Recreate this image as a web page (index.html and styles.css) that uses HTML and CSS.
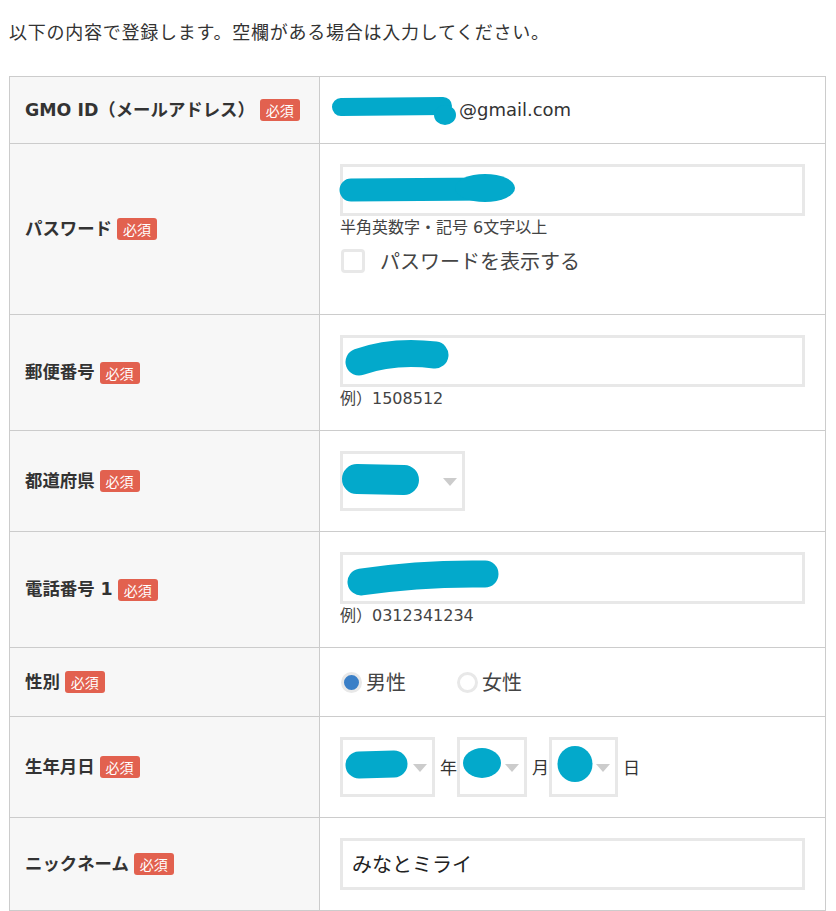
FILE: index.html
```html
<!DOCTYPE html>
<html lang="ja">
<head>
<meta charset="utf-8">
<title>登録内容の確認</title>
<link rel="stylesheet" href="styles.css">
</head>
<body>
<div class="page">
  <p class="intro">以下の内容で登録します。空欄がある場合は入力してください。</p>
  <table class="form">
    <tr>
      <th><div class="head"><span class="lbl">GMO ID（メールアドレス）</span><span class="req">必須</span></div></th>
      <td>
        <div class="email"><span class="mask"><svg class="blob blob-email" width="132" height="32" viewBox="0 0 132 32"><path d="M10 10 L112 9" stroke="#03a9cb" stroke-width="18" stroke-linecap="round" fill="none"/><ellipse cx="114" cy="18" rx="11" ry="10" fill="#03a9cb"/></svg></span>@gmail.com</div>
      </td>
    </tr>
    <tr>
      <th><div class="head"><span class="lbl">パスワード</span><span class="req">必須</span></div></th>
      <td>
        <div class="input"><svg class="blob blob-pw" width="182" height="34" viewBox="0 0 182 34"><path d="M12 22 L150 21" stroke="#03a9cb" stroke-width="23" stroke-linecap="round" fill="none"/><ellipse cx="146" cy="20" rx="30" ry="14" fill="#03a9cb"/></svg></div>
        <div class="help">半角英数字・記号 6文字以上</div>
        <div class="check"><span class="box"></span><span class="check-label">パスワードを表示する</span></div>
      </td>
    </tr>
    <tr>
      <th><div class="head"><span class="lbl">郵便番号</span><span class="req">必須</span></div></th>
      <td>
        <div class="input"><svg class="blob blob-zip" width="112" height="42" viewBox="0 0 112 42"><path d="M16 26 Q 50 14 92 19" stroke="#03a9cb" stroke-width="27" stroke-linecap="round" fill="none"/></svg></div>
        <div class="help">例）1508512</div>
      </td>
    </tr>
    <tr>
      <th><div class="head"><span class="lbl">都道府県</span><span class="req">必須</span></div></th>
      <td>
        <div class="sel sel-pref"><svg class="blob blob-pref" width="80" height="34" viewBox="0 0 80 34"><path d="M16 16 L63 17" stroke="#03a9cb" stroke-width="30" stroke-linecap="round" fill="none"/></svg><span class="arrow"></span></div>
      </td>
    </tr>
    <tr>
      <th><div class="head"><span class="lbl">電話番号 1</span><span class="req">必須</span></div></th>
      <td>
        <div class="input"><svg class="blob blob-tel" width="162" height="40" viewBox="0 0 162 40"><path d="M20 25 Q 80 16 144 17" stroke="#03a9cb" stroke-width="27" stroke-linecap="round" fill="none"/></svg></div>
        <div class="help">例）0312341234</div>
      </td>
    </tr>
    <tr>
      <th><div class="head"><span class="lbl">性別</span><span class="req">必須</span></div></th>
      <td>
        <div class="radios">
          <span class="radio on"></span><span class="rlabel">男性</span>
          <span class="radio"></span><span class="rlabel">女性</span>
        </div>
      </td>
    </tr>
    <tr>
      <th><div class="head"><span class="lbl">生年月日</span><span class="req">必須</span></div></th>
      <td>
        <div class="date">
          <div class="sel sel-y"><svg class="blob blob-y" width="70" height="32" viewBox="0 0 70 32"><path d="M16 15 L51 14" stroke="#03a9cb" stroke-width="27" stroke-linecap="round" fill="none"/></svg><span class="arrow"></span></div>
          <span class="unit">年</span>
          <div class="sel sel-m"><svg class="blob blob-m" width="42" height="34" viewBox="0 0 42 34"><ellipse cx="20" cy="16" rx="19" ry="15" fill="#03a9cb"/></svg><span class="arrow"></span></div>
          <span class="unit">月</span>
          <div class="sel sel-d"><svg class="blob blob-d" width="38" height="38" viewBox="0 0 38 38"><ellipse cx="18" cy="19" rx="17.5" ry="18" fill="#03a9cb"/></svg><span class="arrow"></span></div>
          <span class="unit">日</span>
        </div>
      </td>
    </tr>
    <tr>
      <th><div class="head"><span class="lbl">ニックネーム</span><span class="req">必須</span></div></th>
      <td>
        <div class="input text">みなとミライ</div>
      </td>
    </tr>
  </table>
</div>
</body>
</html>
```

FILE: styles.css
```css
body {
  margin: 0;
  background: #fff;
  color: #333;
  font-family: "DejaVu Sans", "Noto Sans CJK JP", sans-serif;
}

.page {
  padding: 0 9px;
}

.intro {
  margin: 0 0 31px;
  padding-top: 18px;
  font-family: "Noto Sans CJK JP", sans-serif;
  font-size: 18px;
  line-height: 27px;
  letter-spacing: 0.75px;
  color: #333;
}

.form {
  border-collapse: collapse;
  width: 817px;
  table-layout: fixed;
}

.form th,
.form td {
  border: 1px solid #cccccc;
  vertical-align: middle;
}

.form th {
  width: 279px;
  padding: 0 15px;
  background: #f7f7f7;
  text-align: left;
}

.form td {
  padding: 20px;
  background: #fff;
}

.head {
  display: flex;
  align-items: center;
}

.lbl {
  font-size: 17.4px;
  font-weight: bold;
  line-height: 25px;
  color: #333;
}

.req {
  display: inline-block;
  height: 22px;
  line-height: 22px;
  padding: 0 6px;
  margin-left: 5px;
  border-radius: 3px;
  background: #e2614f;
  color: #fff;
  font-family: "Noto Sans CJK JP", sans-serif;
  font-size: 14px;
  font-weight: normal;
}

.email {
  font-size: 18px;
  line-height: 26px;
  color: #333;
}

.mask {
  position: relative;
  display: inline-block;
  width: 119px;
  height: 26px;
  vertical-align: top;
}

.blob {
  position: absolute;
  display: block;
}

.blob-email { left: -9px; top: 0; }
.blob-pw { left: -4px; top: 1px; }
.blob-zip { left: 0; top: -2px; }
.blob-pref { left: -2px; top: 9px; }
.blob-tel { left: -2px; top: 2px; }
.blob-y { left: 0; top: 10px; }
.blob-m { left: 2px; top: 7px; }
.blob-d { left: 5px; top: 5px; }

.input {
  position: relative;
  box-sizing: border-box;
  width: 465px;
  height: 52px;
  border: 3px solid #e8e8e8;
  background: #fff;
}

.input.text {
  padding-left: 9px;
  font-family: "Noto Sans CJK JP", sans-serif;
  font-size: 20px;
  line-height: 46px;
  color: #222;
}

.help {
  font-size: 16px;
  line-height: 23px;
  color: #444;
}

.check {
  display: flex;
  align-items: flex-start;
  box-sizing: border-box;
  height: 55px;
  padding-top: 10px;
}

.box {
  box-sizing: border-box;
  width: 24px;
  height: 24px;
  margin-left: 1px;
  border: 3px solid #e8e8e8;
  border-radius: 4px;
}

.check-label {
  margin-left: 15px;
  font-family: "Noto Sans CJK JP", sans-serif;
  font-size: 20px;
  line-height: 24px;
  color: #444;
}

.radios {
  display: flex;
  align-items: center;
  height: 28px;
}

.radio {
  box-sizing: border-box;
  width: 21px;
  height: 21px;
  margin-left: 1px;
  border: 3px solid #e8e8e8;
  border-radius: 50%;
  background: #fff;
}

.radio.on {
  background: #3a7fc7;
}

.rlabel {
  margin-left: 4px;
  margin-right: 50px;
  font-family: "Noto Sans CJK JP", sans-serif;
  font-size: 20px;
  line-height: 28px;
  color: #444;
}

.date {
  display: flex;
  align-items: center;
}

.sel {
  position: relative;
  box-sizing: border-box;
  height: 60px;
  border: 3px solid #e8e8e8;
  background: #fff;
  display: flex;
  align-items: center;
  justify-content: flex-end;
  padding-right: 5px;
}

.sel-pref { width: 125px; }
.sel-y { width: 95px; }
.sel-m { width: 70px; }
.sel-d { width: 69px; }

.arrow {
  width: 0;
  height: 0;
  margin-top: 2px;
  border-left: 7px solid transparent;
  border-right: 7px solid transparent;
  border-top: 8px solid #cccccc;
}

.unit {
  margin-left: 5px;
  font-family: "Noto Sans CJK JP", sans-serif;
  font-size: 17px;
  line-height: 24px;
  color: #333;
}
```
